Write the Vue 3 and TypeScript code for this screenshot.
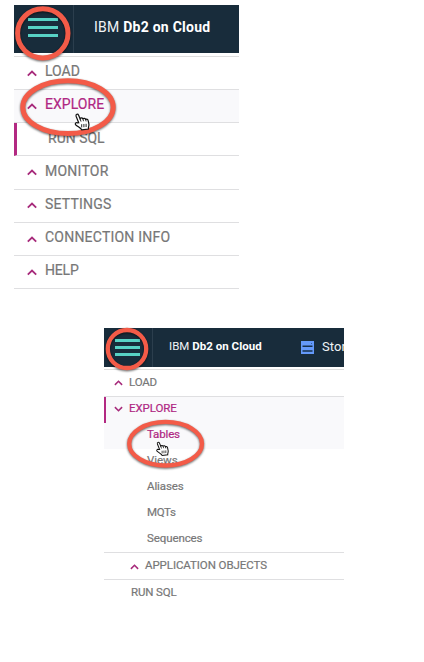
<script setup lang="ts">
interface Item {
  label: string
  kind: string
  arrow?: 'up' | 'down'
  track: number
}

const mainItems: Item[] = [
  { label: 'LOAD', kind: 'top', arrow: 'up', track: 0 },
  { label: 'EXPLORE', kind: 'top hot', arrow: 'up', track: 0.05 },
  { label: 'RUN SQL', kind: 'top current', track: 0 },
  { label: 'MONITOR', kind: 'top', arrow: 'up', track: 0.25 },
  { label: 'SETTINGS', kind: 'top', arrow: 'up', track: 0.2 },
  { label: 'CONNECTION INFO', kind: 'top', arrow: 'up', track: 0.22 },
  { label: 'HELP', kind: 'top', arrow: 'up', track: -0.2 },
]

const subItems: Item[] = [
  { label: 'LOAD', kind: 'top', arrow: 'up', track: -0.2 },
  { label: 'EXPLORE', kind: 'open', arrow: 'down', track: -0.1 },
  { label: 'Tables', kind: 'leaf hot', track: -0.15 },
  { label: 'Views', kind: 'leaf', track: -0.05 },
  { label: 'Aliases', kind: 'leaf', track: -0.1 },
  { label: 'MQTs', kind: 'leaf', track: -0.3 },
  { label: 'Sequences', kind: 'leaf last', track: -0.1 },
  { label: 'APPLICATION OBJECTS', kind: 'group', arrow: 'up', track: -0.08 },
  { label: 'RUN SQL', kind: 'plain', track: -0.15 },
]

const handOutline = 'M3.7 9.5 1.1 3C.4 1 2.8.1 3.6 2L5.1 5.6C5.7 4.5 7.3 4.5 7.9 5.5 8.8 4.8 10.3 5.1 10.6 6.2 11.8 5.6 13 6.3 13.2 7.5L13.9 11C14.2 13 13.1 14 13.4 15.8L6.8 16.7C6 14.8 3 13.6.6 11.5-.4 10.3 1 8.9 2.3 9.6Z'
const fingerLines = 'M5.1 5.6 6 8.4M7.9 5.5l.6 2.5M10.6 6.2l.5 2M6.7 11v3.2M8.9 10.8v3.2M11.1 10.6v3.2'
</script>

<template>
  <main class="page">
    <section class="panel large">
      <header class="bar">
        <div class="menu"><span class="burger"><i></i><i></i><i></i></span></div>
        <div class="title">IBM <b>Db2 on Cloud</b></div>
      </header>
      <nav>
        <div v-for="item in mainItems" :key="item.label" class="row" :class="item.kind">
          <svg v-if="item.arrow" class="arrow" viewBox="0 0 10 7"><path d="M.8 5.7 5 1.5 9.2 5.7" /></svg>
          <span class="label" :style="{ letterSpacing: item.track + 'px' }">{{ item.label }}</span>
        </div>
      </nav>
      <svg class="marks" viewBox="0 0 240 160">
        <g class="rings"><ellipse cx="42.8" cy="33.3" rx="25.2" ry="24.6" /><ellipse cx="68" cy="107.2" rx="45.2" ry="26.4" /></g>
        <g transform="translate(75 113.2)"><path class="hand" :d="handOutline" /><path class="fingers" :d="fingerLines" /></g>
      </svg>
    </section>

    <section class="panel small">
      <header class="bar">
        <div class="menu"><span class="burger"><i></i><i></i><i></i></span></div>
        <div class="title">IBM <b>Db2 on Cloud</b></div>
        <svg class="storage" viewBox="0 0 13 13"><path d="M0 0h13v13H0z" fill="#6499fa" /><path d="M1.5 5.3h10M1.5 10h10" stroke="#15304c" stroke-width="1.5" /><path d="M10 2.5h1" stroke="#34629e" /></svg>
        <span class="stor">Stor</span>
      </header>
      <nav>
        <div v-for="item in subItems" :key="item.label" class="row" :class="item.kind">
          <svg v-if="item.arrow" class="arrow" :class="item.arrow" viewBox="0 0 10 7"><path d="M.8 5.7 5 1.5 9.2 5.7" /></svg>
          <span class="label" :style="{ letterSpacing: item.track + 'px' }">{{ item.label }}</span>
        </div>
      </nav>
      <svg class="marks" viewBox="0 0 240 160">
        <g class="rings narrow"><ellipse cx="23" cy="21" rx="19.2" ry="19" /><ellipse cx="61.6" cy="115.7" rx="36.4" ry="21.8" /></g>
        <g transform="translate(52.5 113.5) scale(.84)"><path class="hand" :d="handOutline" /><path class="fingers" :d="fingerLines" /></g>
      </svg>
    </section>
  </main>
</template>

<style>
body { background: #fff; }
</style>

<style scoped>
.page { box-sizing: border-box; height: 662px; padding-top: 5px; overflow: hidden; font-family: Roboto, "Liberation Sans", sans-serif; }
.panel { position: relative; }
.large { width: 225px; margin-left: 14px; height: 323px; }
.small { width: 240px; margin-left: 104px; }
.bar { display: flex; align-items: center; background: #182c3b; color: #f0f4f6; white-space: nowrap; overflow: hidden; }
.large .bar { height: 48px; }
.small .bar { height: 39px; }
.menu { box-sizing: border-box; align-self: stretch; border-right: 1px solid #2b3e4d; flex: none; }
.large .menu { width: 60px; padding: 13px 0 0 14px; }
.small .menu { width: 49px; padding: 11px 0 0 11px; }
.burger { display: flex; flex-direction: column; }
.large .burger { width: 30px; gap: 5px; }
.small .burger { width: 25px; gap: 4px; }
.burger i { height: 3px; background: #57d2c5; }
.title { flex: none; }
.title b { font-weight: 700; color: #fff; }
.large .title { font-size: 14px; margin: -4px 0 0 20px; letter-spacing: .25px; }
.small .title { font-size: 11.5px; margin: -3px 0 0 16px; width: 93px; letter-spacing: .02px; }
.storage { width: 13px; height: 13px; margin-left: 39px; flex: none; margin-top: -1px; }
.stor { font-size: 13px; margin: -3px 0 0 8px; letter-spacing: .1px; }
nav { border-top: 1px solid #dedede; }
.large nav { margin-top: 3px; }
.small nav { margin-top: 2px; }
.row { box-sizing: border-box; display: flex; align-items: center; color: #777; white-space: nowrap; -webkit-text-stroke: .2px currentColor; }
.large .row { height: 33.15px; border-bottom: 1px solid #dfdfe1; padding-left: 13px; font-size: 14px; padding-bottom: 3.5px; }
.large .arrow { width: 10px; height: 7px; margin: 4px 8px 0 0; }
.large .hot { background: #f9f9fb; }
.row.hot { color: #b02783; }
.large .current { border-left: 3px solid #b32982; padding-left: 31px; }
.arrow { flex: none; overflow: visible; }
.arrow path { fill: none; stroke: #a72b7b; stroke-width: 1.8; }
.small .row { height: 26px; font-size: 11.5px; }
.small .arrow { width: 9px; height: 6px; margin: 3px 6px 0 0; }
.small .down { transform: rotate(180deg); }
.small .row.top { height: 27px; border-bottom: 1px solid #dfdfe1; padding: 0 0 3px 10px; }
.small .open { color: #b02783; border-left: 2px solid #b32982; padding: 0 0 4.5px 8px; background: #f9f9fb; }
.small .leaf { padding: 0 0 4.5px 43px; }
.small .leaf.hot { background: #f9f9fb; }
.small .last { border-bottom: 1px solid #dfdfe1; padding-bottom: 3px; }
.small .row.group { height: 27px; border-bottom: 1px solid #dfdfe1; padding: 0 0 2px 26px; }
.small .plain { padding: 0 0 3px 27px; }
.marks { position: absolute; width: 240px; height: 160px; overflow: visible; pointer-events: none; }
.large .marks { left: -14px; top: -5px; }
.small .marks { left: 0; top: 0; }
.rings { fill: none; stroke: #f35b48; stroke-width: 5; filter: drop-shadow(0 1px 1px #0009); }
.narrow { stroke-width: 4.3; }
.hand { fill: #fff; stroke: #111; stroke-width: 1.2; }
.fingers { fill: none; stroke: #111; stroke-width: .9; }
</style>
